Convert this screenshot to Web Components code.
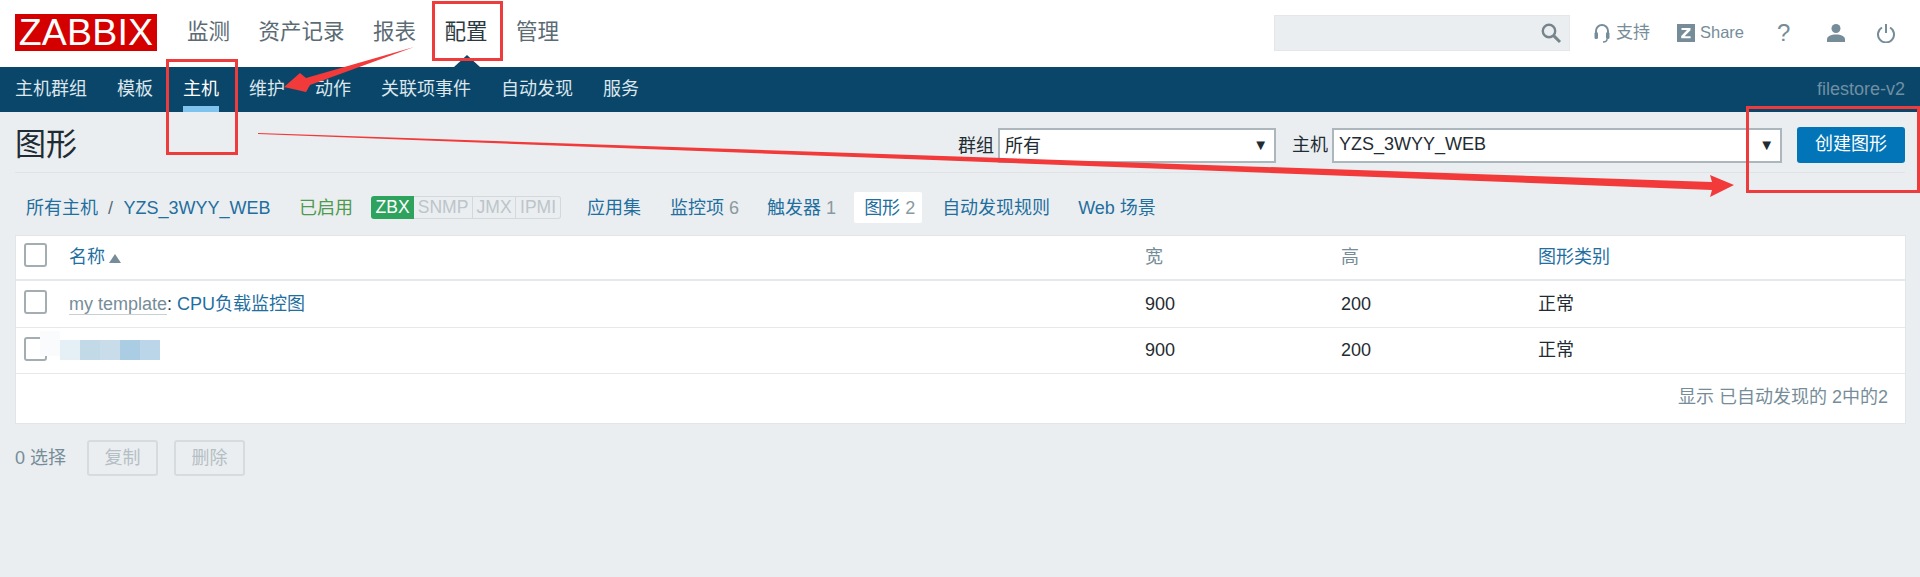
<!DOCTYPE html>
<html lang="zh">
<head>
<meta charset="utf-8">
<title>Zabbix</title>
<style>
html,body{margin:0;padding:0;background:#ebeef0;height:577px;overflow:hidden}
body{font:18px/1.2 "Liberation Sans","Noto Sans CJK SC",sans-serif;color:#1f2c33;position:relative}
</style>
</head>
<body>
<zbx-topbar></zbx-topbar>
<zbx-subnav></zbx-subnav>
<zbx-page-head></zbx-page-head>
<zbx-hostbar></zbx-hostbar>
<zbx-table></zbx-table>
<zbx-actions></zbx-actions>
<zbx-annotations></zbx-annotations>
<script>
const def=(name,html)=>customElements.define(name,class extends HTMLElement{
  constructor(){super();this.attachShadow({mode:'open'}).innerHTML=html;}
});

def('zbx-select',`<style>
:host{display:flex;align-items:center;justify-content:space-between;box-sizing:border-box;height:35px;width:var(--w);background:#fff;border:2px solid #acb7bd;padding:0 6px 0 5px;color:#1f2c33}
i{font-style:normal;font-size:15px;color:#1f2c33}
.t{padding-top:var(--t,0)}
</style><span class="t"><slot></slot></span><i>▼</i>`);

def('zbx-check',`<style>
:host{display:block;box-sizing:border-box;width:23px;height:24px;border:2px solid #a4adb2;border-radius:3px;background:#fff}
</style>`);

def('zbx-topbar',`<style>
:host{display:flex;align-items:center;height:67px;background:#fff;padding:0 15px;box-sizing:border-box}
.logo{box-sizing:border-box;width:142px;height:37px;margin-top:-2px;background:#d40000;color:#fff;font-size:37.5px;line-height:37px;text-align:center;letter-spacing:.2px}
nav{display:flex;gap:28.5px;margin-left:30px;font-size:21.5px;color:#5b6b74;margin-top:-1px}
nav b{font-weight:400;color:#2b3a42}
.right{margin-left:auto;display:flex;align-items:center;margin-top:-1px;color:#768d99}
.search{box-sizing:border-box;width:296px;height:36px;background:#ebeef0;border:1px solid #e4e7e9;display:flex;align-items:center;justify-content:flex-end;padding-right:7px;margin-right:24px}
.l{font-size:17px;white-space:nowrap}
.s{font-size:16.500px}
svg{display:block}
</style>
<div class="logo">ZABBIX</div>
<nav><span>监测</span><span>资产记录</span><span>报表</span><b>配置</b><span>管理</span></nav>
<div class="right">
  <div class="search"><svg width="22" height="22" viewBox="0 0 22 22" fill="none" stroke="#76848c" stroke-width="2.4"><circle cx="9" cy="9" r="6.2"/><path d="M13.6 13.6L20 20" stroke-width="3"/></svg></div>
  <svg width="16" height="20" viewBox="0 0 16 20" fill="none" style="margin-right:6px"><path d="M2 11V8a6 6 0 0 1 12 0v3" stroke="#768d99" stroke-width="2"/><rect x="0.5" y="9" width="3.5" height="7" rx="1.5" fill="#768d99"/><rect x="12" y="9" width="3.5" height="7" rx="1.5" fill="#768d99"/><path d="M13 16q0 3-4 3" stroke="#768d99" stroke-width="1.5"/></svg>
  <span class="l" style="width:34px">支持</span>
  <svg width="18" height="18" viewBox="0 0 18 18" style="margin-left:27px;margin-right:5px"><rect width="18" height="18" fill="#768d99"/><path d="M4.500 4h9v2.200L7.600 12.200h6v2h-9.400v-2.200L10 6H4.500z" fill="#fff"/></svg>
  <span class="l s" style="width:43px">Share</span>
  <span style="margin-left:34px;font-size:24px;width:13px;line-height:1">?</span>
  <svg width="20" height="20" viewBox="0 0 20 20" style="margin-left:36px" fill="#768d99"><circle cx="10" cy="5.500" r="4.500"/><path d="M1 19v-2.500C1 13 5 11.500 10 11.500s9 1.500 9 5V19z"/></svg>
  <svg width="18" height="20" viewBox="0 0 18 20" fill="none" stroke="#768d99" stroke-width="2" style="margin-left:31px;margin-right:10px"><path d="M5 4.500a8 8 0 1 0 8 0"/><path d="M9 1v9"/></svg>
</div>`);

def('zbx-subnav',`<style>
:host{display:flex;align-items:center;height:45px;background:#0a466a;padding:0 15px;color:#dce6ec;box-sizing:border-box}
nav{display:flex;gap:30px}
span{position:relative}
.on{color:#fff}
.on::after{content:"";position:absolute;left:0;right:0;top:27px;height:6px;background:#7fc3ef}
.host{margin-left:auto;color:#6f8fa3}
:host::before{content:"";position:absolute;left:454px;top:55px;border:13px solid transparent;border-top:0;border-bottom:12px solid #0a466a}
</style>
<nav><span>主机群组</span><span>模板</span><span class="on">主机</span><span>维护</span><span>动作</span><span>关联项事件</span><span>自动发现</span><span>服务</span></nav>
<div class="host">filestore-v2</div>`);

def('zbx-page-head',`<style>
:host{display:flex;align-items:flex-start;box-sizing:border-box;height:61px;margin:0 15px;padding-top:15px;border-bottom:1px solid #e0e3e6}
h1{margin:0 0 0 0;font-weight:400;font-size:31px;line-height:36px;color:#1f2c33}
.form{margin-left:auto;display:flex;align-items:center}
label{margin-right:4px;padding-top:1px}
button{box-sizing:border-box;width:108px;height:36px;margin-left:15px;border:0;border-radius:3px;background:#0275b8;color:#fff;font:inherit}
</style>
<h1>图形</h1>
<div class="form">
<label style="padding-top:3px">群组</label><zbx-select style="--w:278px;--t:3px">所有</zbx-select>
<label style="margin-left:16px">主机</label><zbx-select style="--w:450px">YZS_3WYY_WEB</zbx-select>
<button>创建图形</button>
</div>`);

def('zbx-hostbar',`<style>
:host{display:flex;align-items:center;box-sizing:border-box;height:63px;padding:8px 0 0 26px;color:#1f6f9f;white-space:nowrap}
.sep{margin:0 10.5px 0 10px;color:#5b6b74}
.ok{color:#4f9a4f;margin-left:28.5px}
.st{display:flex;margin-left:18px;margin-top:-2px;height:23px;line-height:21px;font-size:17.500px;box-sizing:border-box;border-radius:3px}
.st span{box-sizing:border-box;text-align:center;color:#bcc5ca;border:1px solid #d3d8db;border-left:0}
.st .z{background:#2da35e;color:#fff;border:0;line-height:23px;border-radius:3px 0 0 3px;width:43px}
.st span:last-child{border-radius:0 3px 3px 0}
.t{margin-left:var(--m)}
.c{color:#8a99a1}
.cur{background:#fff;height:31px;line-height:33px;box-sizing:border-box;padding:0 10px;width:68px;margin:-2px 0 0 18px;border-radius:2px}
</style>
<span>所有主机</span><span class="sep">/</span><span>YZS_3WYY_WEB</span>
<span class="ok">已启用</span>
<div class="st"><span class="z">ZBX</span><span style="width:59px">SNMP</span><span style="width:43px">JMX</span><span style="width:45px">IPMI</span></div>
<span class="t" style="--m:26px">应用集</span>
<span class="t" style="--m:29px">监控项 <span class="c">6</span></span>
<span class="t" style="--m:28px">触发器 <span class="c">1</span></span>
<span class="cur">图形 <span class="c">2</span></span>
<span class="t" style="--m:20px">自动发现规则</span>
<span class="t" style="--m:28px">Web 场景</span>`);

def('zbx-row',`<style>
:host{display:grid;grid-template-columns:53px 1076px 196px 197px 1fr;align-items:center;box-sizing:border-box;height:var(--h,47px);border-bottom:var(--b,1px) solid #e6e9eb;white-space:nowrap}
.c0{padding-left:8px;margin-top:var(--k,0)}
.v{padding-top:var(--p,0)}
</style>
<div class="c0"><zbx-check></zbx-check></div>
<div class="v"><slot name="n"></slot></div><div class="v"><slot name="a"></slot></div><div class="v"><slot name="b"></slot></div><div class="v"><slot name="c"></slot></div>`);

def('zbx-table',`<style>
:host{display:block;margin:0 15px 0 16px;background:#fff;height:187px;box-sizing:border-box;box-shadow:0 0 0 1px #e3e6e8;color:#1f2c33}
a{color:#1f6f9f}
.g{color:#768d99}
.tp{color:#768d99;border-bottom:1px solid #c9d0d4}
.arr{display:inline-block;border:6px solid transparent;border-top:0;border-bottom:9px solid #768d99;margin-left:4px}
.blur{position:relative;display:flex;margin:0 0 0 -29px;height:45px}
.blur i{display:block;width:20px;height:20px;margin-top:12px}
.blur i:first-child{margin-top:3px;height:25px}
.foot{height:49px;display:flex;align-items:center;justify-content:flex-end;padding:0 17px 1px 0;color:#768d99;box-sizing:border-box}
</style>
<zbx-row style="--h:45px;--b:2px;--p:0;--k:-5px"><a slot="n">名称<span class="arr"></span></a><span class="g" slot="a">宽</span><span class="g" slot="b">高</span><a slot="c">图形类别</a></zbx-row>
<zbx-row style="--h:47px;--p:1px;--k:-4px"><span slot="n"><span class="tp">my template</span>: <a>CPU负载监控图</a></span><span slot="a">900</span><span slot="b">200</span><span slot="c">正常</span></zbx-row>
<zbx-row style="--h:46px;--p:0;--k:-3px"><div slot="n" class="blur"><i style="background:#fafbfc"></i><i style="background:#e5eff6"></i><i style="background:#c2d9e8"></i><i style="background:#c8dcea"></i><i style="background:#aacde3"></i><i style="background:#bad6e8"></i></div><span slot="a">900</span><span slot="b">200</span><span slot="c">正常</span></zbx-row>
<div class="foot">显示 已自动发现的 2中的2</div>`);

def('zbx-actions',`<style>
:host{display:flex;align-items:center;margin:17px 15px 0;color:#768d99}
button{box-sizing:border-box;width:71px;height:36px;margin-left:16px;padding-top:3px;background:#ebeef0;border:2px solid #d6dbde;border-radius:3px;color:#b4bfc5;font:inherit}
button:first-of-type{margin-left:21px}
span{padding-top:2px}
</style>
<span>0 选择</span><button>复制</button><button>删除</button>`);

def('zbx-annotations',`<style>
:host{position:absolute;left:0;top:0;width:1920px;height:577px;pointer-events:none}
svg{display:block}
</style>
<svg width="1920" height="577" viewBox="0 0 1920 577">
<g fill="none" stroke="#ee3b3b" stroke-width="3">
<rect x="433.500" y="2.500" width="68" height="57"/>
<rect x="167.500" y="60.500" width="69" height="93"/>
<rect x="1747.500" y="107.500" width="171" height="84"/>
</g>
<g fill="#f23a3a">
<polygon points="284,87 300,73 306,78 414,47 310,85 306,92"/>
<polygon points="258,133 1712,182 1710,175 1734,185 1710,197 1712,190 258,134"/>
</g>
</svg>`);
</script>
</body>
</html>
